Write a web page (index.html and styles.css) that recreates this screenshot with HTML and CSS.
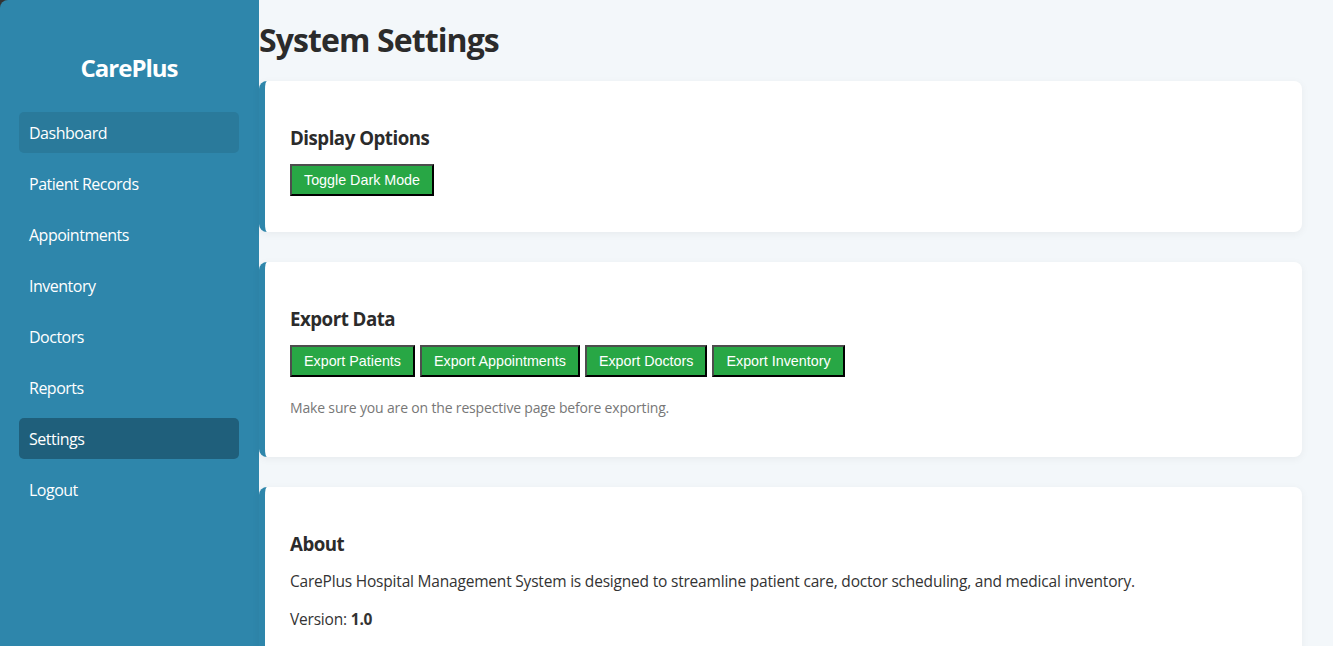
FILE: index.html
```html
<!DOCTYPE html>
<html lang="en">
<head>
<meta charset="utf-8">
<title>CarePlus - Settings</title>
<link rel="stylesheet" href="styles.css">
</head>
<body>
<div class="layout">
  <aside class="sidebar">
    <div class="logo">CarePlus</div>
    <nav class="nav">
      <a class="nav-item hover" href="#">Dashboard</a>
      <a class="nav-item" href="#">Patient Records</a>
      <a class="nav-item" href="#">Appointments</a>
      <a class="nav-item" href="#">Inventory</a>
      <a class="nav-item" href="#">Doctors</a>
      <a class="nav-item" href="#">Reports</a>
      <a class="nav-item active" href="#">Settings</a>
      <a class="nav-item" href="#">Logout</a>
    </nav>
  </aside>
  <main class="main">
    <h1 class="page-title">System Settings</h1>
    <section class="card">
      <h3 class="card-title">Display Options</h3>
      <div class="btn-row">
        <button class="btn">Toggle Dark Mode</button>
      </div>
    </section>
    <section class="card card-export">
      <h3 class="card-title">Export Data</h3>
      <div class="btn-row">
        <button class="btn">Export Patients</button>
        <button class="btn">Export Appointments</button>
        <button class="btn">Export Doctors</button>
        <button class="btn">Export Inventory</button>
      </div>
      <p class="note">Make sure you are on the respective page before exporting.</p>
    </section>
    <section class="card">
      <h3 class="card-title">About</h3>
      <p class="text">CarePlus Hospital Management System is designed to streamline patient care, doctor scheduling, and medical inventory.</p>
      <p class="text">Version: <strong>1.0</strong></p>
    </section>
  </main>
</div>
</body>
</html>
```

FILE: styles.css
```css
* { box-sizing: border-box; }
html, body {
  margin: 0;
  padding: 0;
  height: 100%;
}
body {
  font-family: "Open Sans", "Noto Sans", sans-serif;
  background: #f3f7fa;
  color: #333;
  overflow: hidden;
}
.layout {
  display: flex;
  min-height: 100vh;
  background: #333;
}
.sidebar {
  width: 259px;
  flex-shrink: 0;
  background: #2e86ab;
  padding: 51px 20px 20px 19px;
  border-top-left-radius: 8px;
  color: #fff;
}
.logo {
  text-align: center;
  font-size: 24px;
  font-weight: 700;
  line-height: 34px;
  letter-spacing: -1px;
  margin-bottom: 27px;
}
.nav {
  display: flex;
  flex-direction: column;
  gap: 10px;
}
.nav-item {
  display: block;
  height: 41px;
  line-height: 41px;
  padding: 1px 10px 0;
  font-size: 16px;
  letter-spacing: -0.5px;
  color: #fff;
  text-decoration: none;
  border-radius: 5px;
}
.nav-item.hover {
  background: #2a7a9b;
}
.nav-item.active {
  background: #1f5f7b;
}
.main {
  flex: 1;
  background: #f3f7fa;
  padding: 0 31px 0 0;
}
.page-title {
  margin: 18px 0 19px;
  font-size: 32px;
  line-height: 44px;
  font-weight: 700;
  letter-spacing: -0.9px;
  color: #2b2b2b;
}
.card {
  background: #fff;
  border-left: 6px solid #2e86ab;
  border-radius: 8px;
  padding: 25px 25px 36px 25px;
  margin-bottom: 30px;
  box-shadow: 0 2px 8px rgba(0, 0, 0, 0.05);
}
.card-title {
  margin: 19px 0 14px;
  font-size: 18.7px;
  line-height: 25px;
  font-weight: 700;
  letter-spacing: -0.5px;
  color: #2b2b2b;
}
.btn-row {
  display: flex;
  gap: 5px;
}
.btn {
  font-family: "Liberation Sans", Arial, sans-serif;
  font-size: 14.3px;
  line-height: 16px;
  padding: 6px 12px;
  color: #fff;
  background: #28a745;
  border: 2px solid;
  border-color: #4d4d4d #000 #000 #4d4d4d;
  cursor: pointer;
}
.note {
  margin: 22px 0 4px;
  font-size: 14px;
  line-height: 18px;
  letter-spacing: -0.17px;
  color: #777;
}
.text {
  margin: 15px 0 0;
  font-size: 15.5px;
  line-height: 23px;
  letter-spacing: -0.2px;
  color: #333;
}
.card-title + .text {
  margin-top: 3px;
}
```
